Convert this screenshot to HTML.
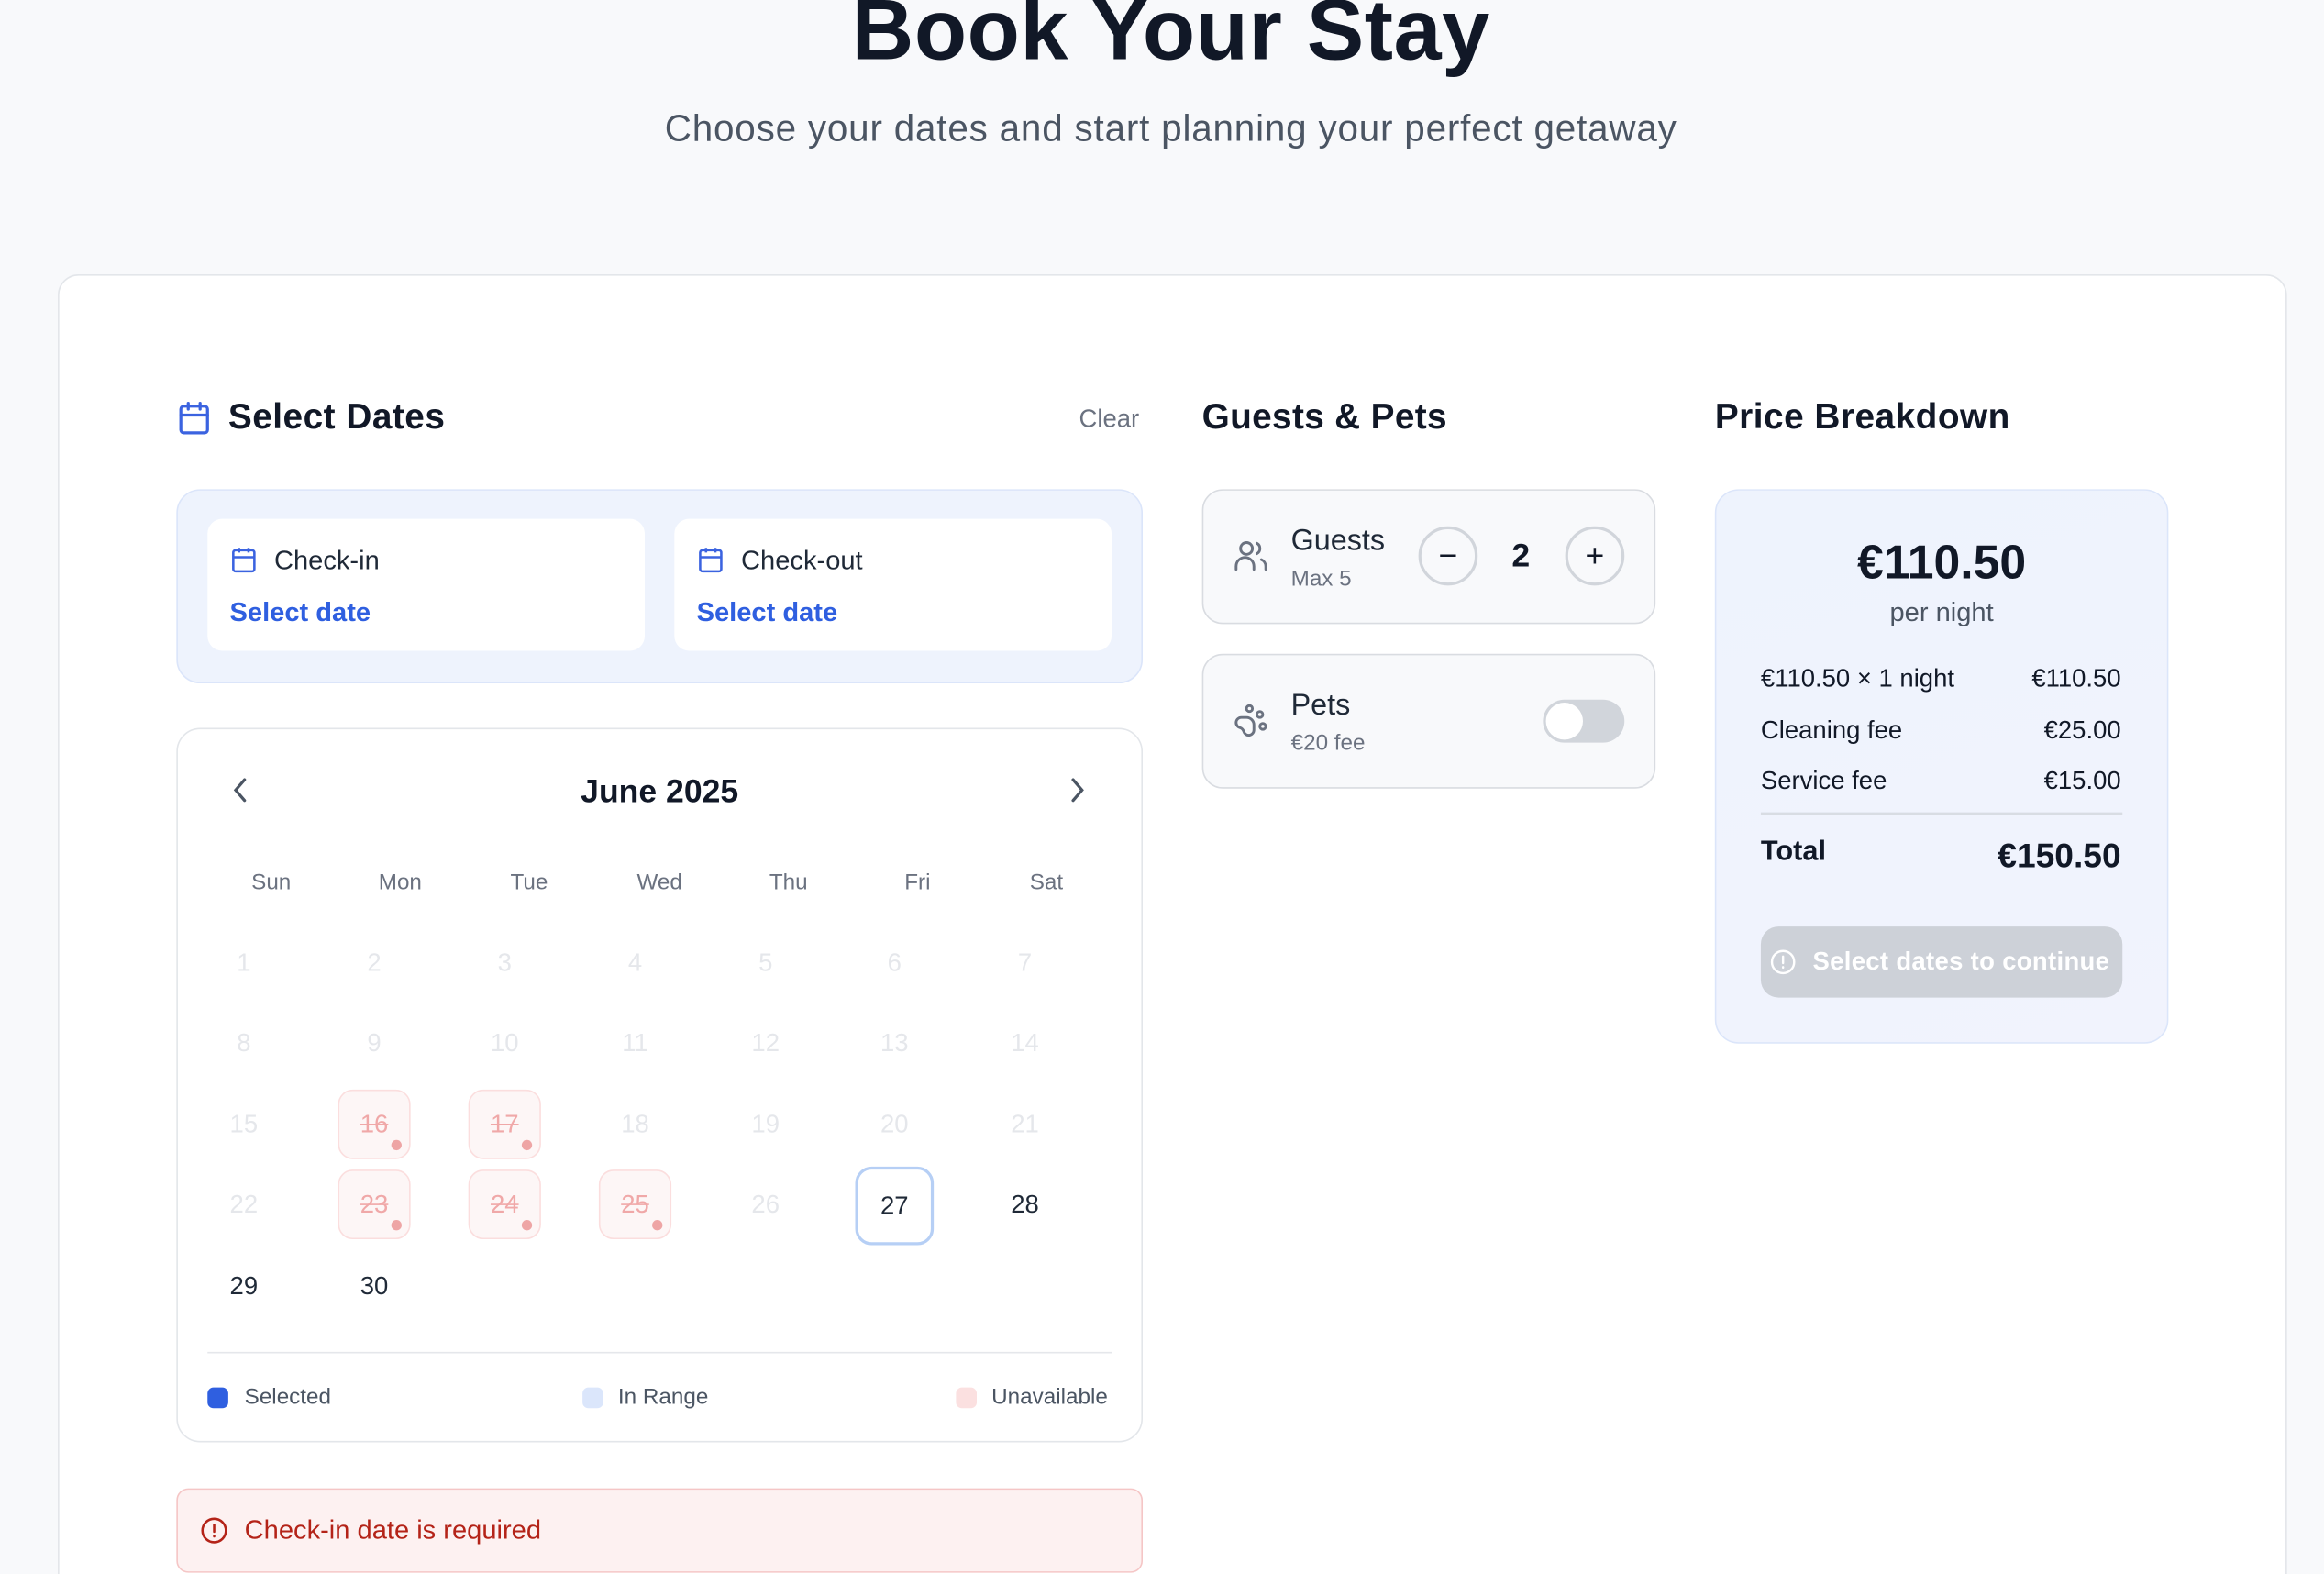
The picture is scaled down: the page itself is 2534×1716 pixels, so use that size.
<!DOCTYPE html>
<html><head><meta charset="utf-8"><style>
*{box-sizing:border-box;margin:0;padding:0}
html,body{width:2534px;height:1716px;overflow:hidden;background:#f8f9fb}
#w{position:absolute;left:0;top:0;width:1568px;height:1062px;overflow:hidden;transform:scale(1.6161);transform-origin:0 0;font-family:"Liberation Sans",sans-serif;color:#111827}
.a{position:absolute}
.ctr{text-align:center}
.cell{position:absolute;width:49px;height:47px;display:flex;align-items:center;justify-content:center;font-size:17px;color:#e5e7eb}
.un{background:#fdf6f6;border:1px solid #fbdede;border-radius:10px;color:#f0a8a8;text-decoration:line-through}
.un::after{content:"";position:absolute;right:5px;bottom:5px;width:7px;height:7px;border-radius:50%;background:#eea5a5}
.dk{color:#1f2937}
</style></head><body><div id="w">
<div class="a ctr" style="left:0;width:1580px;top:-14px;font-size:58px;font-weight:bold;color:#111827;line-height:70px;letter-spacing:0.3px">Book Your Stay</div>
<div class="a ctr" style="left:0;width:1580px;top:73px;font-size:25px;color:#4b5563;letter-spacing:0.5px">Choose your dates and start planning your perfect getaway</div>

<div class="a" style="left:39px;top:185px;width:1504px;height:900px;background:#fff;border:1px solid #e3e6ea;border-radius:14px"></div>

<svg class="a" style="left:119px;top:270px" width="24" height="24" viewBox="0 0 24 24" fill="none" stroke="#3b63e0" stroke-width="2" stroke-linecap="round"><rect x="3" y="4" width="18" height="18" rx="2"/><path d="M3 10h18M8 2v4M16 2v4"/></svg>
<div class="a" style="left:154px;top:268px;font-size:24px;font-weight:bold;color:#111827;letter-spacing:0.3px">Select Dates</div>
<div class="a" style="left:728px;top:273px;font-size:17px;color:#6b7280">Clear</div>

<div class="a" style="left:119px;top:330px;width:652px;height:131px;background:#eef3fd;border:1px solid #dbe5fa;border-radius:16px"></div>
<div class="a" style="left:140px;top:350px;width:295px;height:89px;background:#fff;border-radius:10px"></div>
<div class="a" style="left:455px;top:350px;width:295px;height:89px;background:#fff;border-radius:10px"></div>
<svg class="a" style="left:155px;top:368px" width="19" height="19" viewBox="0 0 24 24" fill="none" stroke="#3b63e0" stroke-width="2"><rect x="3" y="4" width="18" height="18" rx="2"/><path d="M3 10h18M8 2v4M16 2v4"/></svg>
<div class="a" style="left:185px;top:368px;font-size:18px;color:#1f2937">Check-in</div>
<div class="a" style="left:155px;top:403px;font-size:18px;font-weight:bold;color:#2f5fe0">Select date</div>
<svg class="a" style="left:470px;top:368px" width="19" height="19" viewBox="0 0 24 24" fill="none" stroke="#3b63e0" stroke-width="2"><rect x="3" y="4" width="18" height="18" rx="2"/><path d="M3 10h18M8 2v4M16 2v4"/></svg>
<div class="a" style="left:500px;top:368px;font-size:18px;color:#1f2937">Check-out</div>
<div class="a" style="left:470px;top:403px;font-size:18px;font-weight:bold;color:#2f5fe0">Select date</div>

<div class="a" style="left:119px;top:491px;width:652px;height:482px;background:#fff;border:1px solid #e3e6ea;border-radius:16px"></div>
<svg class="a" style="left:154px;top:524px" width="16" height="18" viewBox="0 0 16 18" fill="none" stroke="#4b5563" stroke-width="2" stroke-linecap="round"><path d="M11 2L5 9l6 7"/></svg>
<svg class="a" style="left:719px;top:524px" width="16" height="18" viewBox="0 0 16 18" fill="none" stroke="#4b5563" stroke-width="2" stroke-linecap="round"><path d="M5 2l6 7-6 7"/></svg>
<div class="a ctr" style="left:119px;width:652px;top:521px;font-size:22px;font-weight:bold;color:#111827">June 2025</div>

<div class="a ctr" style="left:158px;top:587px;width:50px;font-size:15px;color:#6b7280">Sun</div>
<div class="a ctr" style="left:245px;top:587px;width:50px;font-size:15px;color:#6b7280">Mon</div>
<div class="a ctr" style="left:332px;top:587px;width:50px;font-size:15px;color:#6b7280">Tue</div>
<div class="a ctr" style="left:420px;top:587px;width:50px;font-size:15px;color:#6b7280">Wed</div>
<div class="a ctr" style="left:507px;top:587px;width:50px;font-size:15px;color:#6b7280">Thu</div>
<div class="a ctr" style="left:594px;top:587px;width:50px;font-size:15px;color:#6b7280">Fri</div>
<div class="a ctr" style="left:681px;top:587px;width:50px;font-size:15px;color:#6b7280">Sat</div>

<div class="cell" style="left:140px;top:626px">1</div><div class="cell" style="left:228px;top:626px">2</div><div class="cell" style="left:316px;top:626px">3</div><div class="cell" style="left:404px;top:626px">4</div><div class="cell" style="left:492px;top:626px">5</div><div class="cell" style="left:579px;top:626px">6</div><div class="cell" style="left:667px;top:626px">7</div>
<div class="cell" style="left:140px;top:680px">8</div><div class="cell" style="left:228px;top:680px">9</div><div class="cell" style="left:316px;top:680px">10</div><div class="cell" style="left:404px;top:680px">11</div><div class="cell" style="left:492px;top:680px">12</div><div class="cell" style="left:579px;top:680px">13</div><div class="cell" style="left:667px;top:680px">14</div>
<div class="cell" style="left:140px;top:735px">15</div><div class="cell un" style="left:228px;top:735px">16</div><div class="cell un" style="left:316px;top:735px">17</div><div class="cell" style="left:404px;top:735px">18</div><div class="cell" style="left:492px;top:735px">19</div><div class="cell" style="left:579px;top:735px">20</div><div class="cell" style="left:667px;top:735px">21</div>
<div class="cell" style="left:140px;top:789px">22</div><div class="cell un" style="left:228px;top:789px">23</div><div class="cell un" style="left:316px;top:789px">24</div><div class="cell un" style="left:404px;top:789px">25</div><div class="cell" style="left:492px;top:789px">26</div><div class="cell dk" style="left:577px;top:787px;width:53px;height:53px;border:2px solid #b6cff5;border-radius:11px">27</div><div class="cell dk" style="left:667px;top:789px">28</div>
<div class="cell dk" style="left:140px;top:844px">29</div><div class="cell dk" style="left:228px;top:844px">30</div>

<div class="a" style="left:140px;top:912px;width:610px;height:1px;background:#e5e7eb"></div>
<div class="a" style="left:140px;top:936px;width:14px;height:14px;border-radius:4px;background:#2f5fe0"></div>
<div class="a" style="left:165px;top:934px;font-size:15px;color:#4b5563">Selected</div>
<div class="a" style="left:393px;top:936px;width:14px;height:14px;border-radius:4px;background:#dbe6fb"></div>
<div class="a" style="left:417px;top:934px;font-size:15px;color:#4b5563">In Range</div>
<div class="a" style="left:645px;top:936px;width:14px;height:14px;border-radius:4px;background:#fbe0e0"></div>
<div class="a" style="left:669px;top:934px;font-size:15px;color:#4b5563">Unavailable</div>

<div class="a" style="left:119px;top:1004px;width:652px;height:57px;background:#fdf1f1;border:1px solid #f5c6c6;border-radius:8px"></div>
<svg class="a" style="left:135px;top:1023px" width="19" height="19" viewBox="0 0 24 24" fill="none" stroke="#b42318" stroke-width="2" stroke-linecap="round"><circle cx="12" cy="12" r="10"/><path d="M12 7v6M12 16.5v.5"/></svg>
<div class="a" style="left:165px;top:1022px;font-size:18px;color:#b42318">Check-in date is required</div>

<div class="a" style="left:811px;top:268px;font-size:24px;font-weight:bold;letter-spacing:0.2px">Guests &amp; Pets</div>
<div class="a" style="left:811px;top:330px;width:306px;height:91px;background:#f8f9fb;border:1px solid #d9dce1;border-radius:14px"></div>
<svg class="a" style="left:832px;top:363px" width="24" height="24" viewBox="0 0 24 24" fill="none" stroke="#6b7280" stroke-width="1.8" stroke-linecap="round"><circle cx="9" cy="7" r="4"/><path d="M2 21v-2a6 6 0 0 1 12 0v2M16 3.5a4 4 0 0 1 0 7M22 21v-2a5 5 0 0 0-3-4.5"/></svg>
<div class="a" style="left:871px;top:354px;font-size:20px;color:#1f2937">Guests</div>
<div class="a" style="left:871px;top:382px;font-size:15px;color:#6b7280">Max 5</div>
<div class="a" style="left:957px;top:355px;width:40px;height:40px;border:2px solid #d1d5db;border-radius:50%;display:flex;align-items:center;justify-content:center;font-size:22px;color:#111827">−</div>
<div class="a" style="left:1020px;top:362px;font-size:22px;font-weight:bold">2</div>
<div class="a" style="left:1056px;top:355px;width:40px;height:40px;border:2px solid #d1d5db;border-radius:50%;display:flex;align-items:center;justify-content:center;font-size:22px;color:#111827">+</div>

<div class="a" style="left:811px;top:441px;width:306px;height:91px;background:#f8f9fb;border:1px solid #d9dce1;border-radius:14px"></div>
<svg class="a" style="left:832px;top:474px" width="24" height="24" viewBox="0 0 24 24" fill="none" stroke="#6b7280" stroke-width="1.8"><circle cx="11" cy="4" r="2"/><circle cx="18" cy="8" r="2"/><circle cx="20" cy="16" r="2"/><path d="M9 10a5 5 0 0 1 5 5v3.5a3.5 3.5 0 0 1-6.84 1.045Q6.52 17.480 4.46 16.840A3.5 3.5 0 0 1 5.5 10Z"/></svg>
<div class="a" style="left:871px;top:465px;font-size:20px;color:#1f2937">Pets</div>
<div class="a" style="left:871px;top:493px;font-size:15px;color:#6b7280">€20 fee</div>
<div class="a" style="left:1041px;top:472px;width:55px;height:29px;border-radius:15px;background:#d1d5db"></div>
<div class="a" style="left:1043px;top:474px;width:25px;height:25px;border-radius:50%;background:#fff"></div>

<div class="a" style="left:1157px;top:268px;font-size:24px;font-weight:bold;letter-spacing:0.3px">Price Breakdown</div>
<div class="a" style="left:1157px;top:330px;width:306px;height:374px;background:linear-gradient(160deg,#eef3fd,#f1f3fd);border:1px solid #dbe5fa;border-radius:16px"></div>
<div class="a ctr" style="left:1157px;width:306px;top:361px;font-size:32px;font-weight:bold">€110.50</div>
<div class="a ctr" style="left:1157px;width:306px;top:403px;font-size:18px;color:#4b5563">per night</div>
<div class="a" style="left:1188px;top:448px;font-size:17px">€110.50 × 1 night</div><div class="a" style="right:137px;top:448px;font-size:17px">€110.50</div>
<div class="a" style="left:1188px;top:483px;font-size:17px">Cleaning fee</div><div class="a" style="right:137px;top:483px;font-size:17px">€25.00</div>
<div class="a" style="left:1188px;top:517px;font-size:17px">Service fee</div><div class="a" style="right:137px;top:517px;font-size:17px">€15.00</div>
<div class="a" style="left:1188px;top:548px;width:244px;height:2px;background:#d8dce3"></div>
<div class="a" style="left:1188px;top:564px;font-size:19px;font-weight:bold">Total</div>
<div class="a" style="right:137px;top:564px;font-size:23px;font-weight:bold">€150.50</div>
<div class="a" style="left:1188px;top:625px;width:244px;height:48px;background:#cdd1d8;border-radius:12px"></div>
<svg class="a" style="left:1194px;top:640px" width="18" height="18" viewBox="0 0 24 24" fill="none" stroke="#fff" stroke-width="2" stroke-linecap="round"><circle cx="12" cy="12" r="10"/><path d="M12 7v6M12 16.5v.5"/></svg>
<div class="a" style="left:1223px;top:639px;font-size:17px;font-weight:bold;color:#fff;letter-spacing:0.2px">Select dates to continue</div>
</div></body></html>
